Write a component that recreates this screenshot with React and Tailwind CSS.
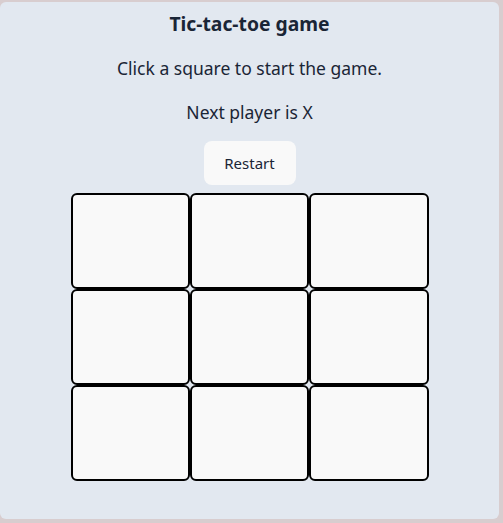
import { useState } from "react";

// a single square on the board
function Square({ value, onClick }) {
  return (
    <button
      onClick={onClick}
      className="h-[96px] w-full rounded-md border-2 border-black bg-[#f9f9f9] text-4xl font-bold text-[#1e293b]"
    >
      {value}
    </button>
  );
}

function winnerOf(sq) {
  const lines = [
    [0, 1, 2], [3, 4, 5], [6, 7, 8],
    [0, 3, 6], [1, 4, 7], [2, 5, 8],
    [0, 4, 8], [2, 4, 6],
  ];
  for (const [a, b, c] of lines) {
    if (sq[a] && sq[a] === sq[b] && sq[a] === sq[c]) return sq[a];
  }
  return null;
}

export default function App() {
  const [squares, setSquares] = useState(Array(9).fill(null));
  const [xNext, setXNext] = useState(true);

  const winner = winnerOf(squares);
  const started = squares.some(Boolean);

  function play(i) {
    if (squares[i] || winner) return;
    const next = squares.slice();
    next[i] = xNext ? "X" : "O";
    setSquares(next);
    setXNext(!xNext);
  }

  function restart() {
    setSquares(Array(9).fill(null));
    setXNext(true);
  }

  return (
    <div
      className="h-[523px] w-[503px] bg-[#d8cdcf] pt-[2px] pr-[4px]"
      style={{ fontFamily: '"Noto Sans", "Open Sans", sans-serif' }}
    >
      <div className="flex h-[517px] flex-col items-center rounded-md bg-[#e2e8f0] pt-[10px] text-[#1a2536]">
        <h1 className="text-[19.3px] font-bold leading-6">Tic-tac-toe game</h1>
        <p className="mt-5 text-[17.5px] leading-6">
          {started ? "Game in progress." : "Click a square to start the game."}
        </p>
        <p className="mt-5 text-[17.5px] leading-6">
          {winner ? `Winner is ${winner}` : `Next player is ${xNext ? "X" : "O"}`}
        </p>
        <button
          onClick={restart}
          className="mt-[17px] h-[44px] w-[92px] rounded-lg bg-[#f9f9f9] text-[15px]"
        >
          Restart
        </button>
        <div className="mt-2 grid w-[358px] grid-cols-3">
          {squares.map((v, i) => (
            <Square key={i} value={v} onClick={() => play(i)} />
          ))}
        </div>
      </div>
    </div>
  );
}
